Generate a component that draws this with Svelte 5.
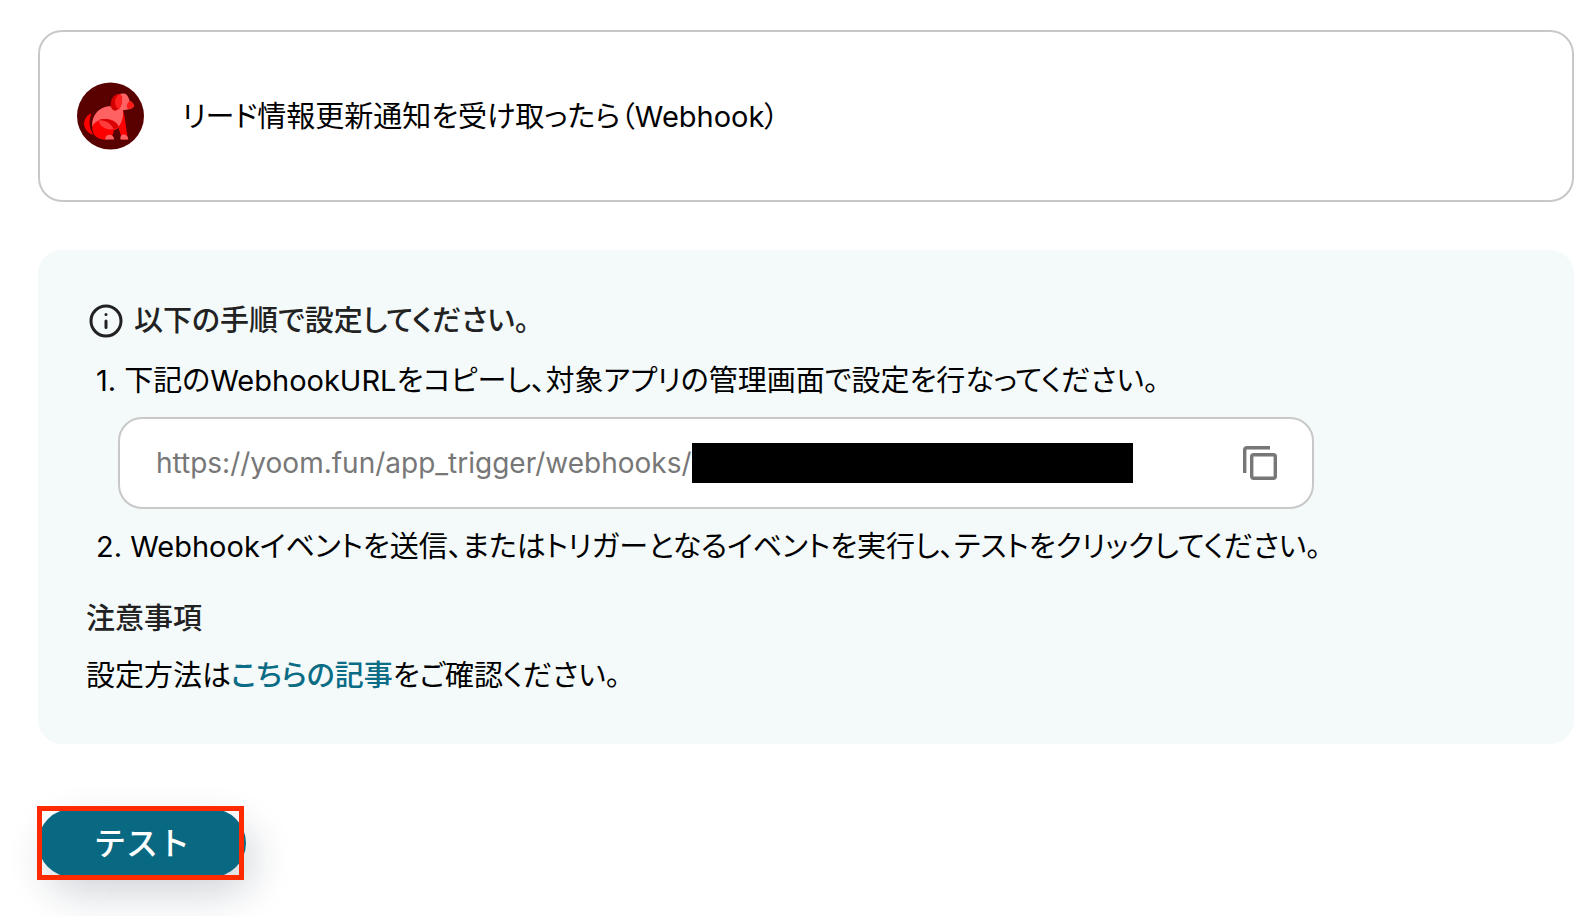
<script>
  let webhookUrl = $state("https://yoom.fun/app_trigger/webhooks/");

  function copyUrl() {
    navigator.clipboard?.writeText(webhookUrl);
  }
</script>

<main class="page">
  <section class="trigger-card">
    <svg class="app-icon" viewBox="0 0 200 200" aria-hidden="true">
      <circle cx="100" cy="100" r="100" fill="#590000" />
      <path d="M43 92C23 100 16 122 25 138c5 9 14 16 24 18-10-14-17-36-6-64z" fill="#f00" />
      <path
        d="M46 132c-4-30 18-61 54-61 8 0 12 3 16 8l20-1c6 20 0 42-14 58-8 8-40 16-76-4z"
        fill="#ff6262"
      />
      <path d="M139 82l13 88h-18l-10-36c10-14 15-32 15-52z" fill="#f00" />
      <path
        d="M46 132c6-18 36-30 62-18 8 4 14 10 17 18-4 6-10 9-15 9 0 10-4 18-10 24l-10 5H78c-20-2-34-16-32-38z"
        fill="#f00"
      />
      <path d="M64 113c16-8 46-6 60 17-3 4-9 8-15 9-20 4-40-5-45-26z" fill="#ff3b3b" />
      <path d="M64 113c16-8 46-6 60 17-3 4-9 8-15 9-8-18-24-27-45-26z" fill="#d80000" />
      <path d="M84 170c0-8 6-14 13-14 8 0 13 6 14 14z" fill="#ff6262" />
      <path d="M130 170c-2-10 4-16 11-15 7 0 11 7 12 15z" fill="#ff6262" />
      <path
        d="M112 45c6-10 16-12 28-12 10 1 14 11 17 22 8 3 13 9 12 16-3 8-14 9-27 11-8 2-12 0-18-2-8-4-13-18-12-35z"
        fill="#ff6262"
      />
      <path
        d="M127 34c-18-1-28 16-26 37 1 8 7 13 13 13 16-2 22-22 20-39-1-6-3-10-7-11z"
        fill="#d40000"
      />
      <path d="M127 34c-9 6-15 17-13 30 2 9 7 14 12 15 8-10 10-23 8-34-1-6-3-10-7-11z" fill="#ff2020" />
      <path d="M158 55c8 3 13 9 12 15-3 7-10 9-18 9-6-8-3-20 6-24z" fill="#ff1a1a" />
    </svg>
    <h1 class="trigger-title">リード情報更新通知を受け取ったら（Webhook）</h1>
  </section>

  <section class="guide">
    <h2 class="guide-heading">
      <svg class="info-icon" viewBox="0 0 34 34" fill="none" aria-hidden="true">
        <circle cx="17" cy="17" r="15" stroke="currentColor" stroke-width="3" />
        <path
          d="M17 17v6.500"
          stroke="currentColor"
          stroke-width="3"
          stroke-linecap="round"
        />
        <circle cx="17" cy="10.500" r="1.500" fill="currentColor" />
      </svg>
      以下の手順で設定してください。
    </h2>

    <ol class="steps">
      <li>
        <label for="webhook-url"
          >1. 下記のWebhookURLをコピーし、対象アプリの管理画面で設定を行なってください。</label
        >
        <div class="url-field">
          <input id="webhook-url" type="text" readonly bind:value={webhookUrl} />
          <span class="redacted"></span>
          <button class="copy-btn" aria-label="コピー" onclick={copyUrl}>
            <svg viewBox="0 0 34 34" fill="none" stroke="currentColor" stroke-width="3.400">
              <path d="M1.700 27V4Q1.700 1.700 4 1.700H27" />
              <rect x="8.700" y="8.700" width="23.600" height="23.600" rx="2" />
            </svg>
          </button>
        </div>
      </li>
      <li>
        2. Webhookイベントを送信、またはトリガーとなるイベントを実行し、テストをクリックしてください。
      </li>
    </ol>

    <h3 class="note-heading">注意事項</h3>
    <p class="note">
      設定方法は<a href="#article">こちらの記事</a>をご確認ください。
    </p>
  </section>

  <div class="highlight">
    <button class="test-btn">テスト</button>
  </div>
</main>

<style>
  :global(body) {
    margin: 0;
    background: #fff;
  }

  .page {
    box-sizing: border-box;
    padding: 30px 22px 36px 38px;
    font-family: Inter, "Noto Sans CJK JP", sans-serif;
    font-feature-settings: "palt";
    font-size: 29px;
    line-height: 57px;
    color: #000;
  }

  h1,
  h2,
  h3,
  p,
  ol {
    margin: 0;
    padding: 0;
    font-size: inherit;
  }

  .trigger-card {
    display: flex;
    align-items: center;
    gap: 38px;
    padding: 50px 37px;
    border: 2px solid #c8c8c8;
    border-radius: 24px;
  }

  .app-icon {
    flex: none;
    width: 67px;
    height: 68px;
  }

  .trigger-title {
    font-weight: 400;
  }

  .guide {
    margin-top: 48px;
    padding: 42px 48px 40px;
    border-radius: 24px;
    background: #f4fafa;
  }

  .guide-heading {
    display: flex;
    align-items: center;
    gap: 11px;
    padding-left: 3px;
    font-weight: 500;
    color: #222;
  }

  .info-icon {
    flex: none;
    width: 34px;
    height: 34px;
  }

  .steps {
    padding: 3px 0 0 10px;
    list-style: none;
  }

  .steps label {
    display: block;
  }

  .url-field {
    display: flex;
    align-items: center;
    box-sizing: border-box;
    max-width: 1196px;
    height: 92px;
    margin: 8px 0 9px 22px;
    padding: 0 35px 0 36px;
    border: 2px solid #c8c8c8;
    border-radius: 24px;
    background: #fff;
  }

  .url-field input {
    width: 536px;
    padding: 0;
    border: none;
    outline: none;
    background: none;
    font: inherit;
    font-size: 28px;
    color: #777;
  }

  .redacted {
    flex: 0 1 441px;
    height: 40px;
    background: #000;
  }

  .copy-btn {
    display: flex;
    margin-left: auto;
    padding: 0;
    border: none;
    background: none;
    color: #777;
    cursor: pointer;
  }

  .copy-btn svg {
    width: 34px;
    height: 34px;
  }

  .note-heading {
    margin-top: 15px;
    font-weight: 500;
    color: #222;
  }

  .note a {
    font-weight: 500;
    color: #0a6c85;
    text-decoration: none;
  }

  .highlight {
    display: flex;
    box-sizing: border-box;
    width: 207px;
    height: 74px;
    margin: 62px 0 0 -1px;
    border: 5px solid #ff2a00;
  }

  .test-btn {
    position: relative;
    z-index: -1;
    flex: none;
    width: 208px;
    margin: -2px 0 -2px -4px;
    padding: 0;
    border: none;
    border-radius: 34px;
    background: #0a6982;
    box-shadow: 8px 16px 40px rgba(20, 35, 60, 0.2);
    font: inherit;
    font-size: 32px;
    font-weight: 500;
    font-feature-settings: normal;
    color: #fff;
    cursor: pointer;
  }
</style>
